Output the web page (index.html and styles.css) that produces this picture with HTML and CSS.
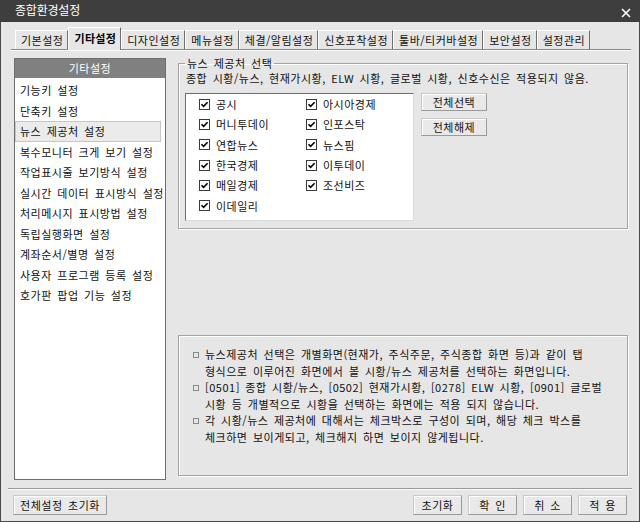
FILE: index.html
```html
<!DOCTYPE html>
<html lang="ko">
<head>
<meta charset="utf-8">
<title>종합환경설정</title>
<link rel="stylesheet" href="styles.css">
</head>
<body>
<div class="window">
  <div class="titlebar">
    <span class="title">종합환경설정</span>
    <svg class="close" width="10" height="10" viewBox="0 0 10 10"><path d="M1 1L9 9M9 1L1 9" stroke="#fff" stroke-width="1.6"/></svg>
  </div>
  <div class="frame">
    <div class="tabs">
      <div class="tab">기본설정</div>
      <div class="tab active">기타설정</div>
      <div class="tab">디자인설정</div>
      <div class="tab">메뉴설정</div>
      <div class="tab">체결/알림설정</div>
      <div class="tab">신호포착설정</div>
      <div class="tab">툴바/티커바설정</div>
      <div class="tab">보안설정</div>
      <div class="tab">설정관리</div>
    </div>
    <div class="content">
      <div class="sidebar">
        <div class="side-head">기타설정</div>
        <ul class="side-list">
          <li>기능키 설정</li>
          <li>단축키 설정</li>
          <li class="sel">뉴스 제공처 설정</li>
          <li>복수모니터 크게 보기 설정</li>
          <li>작업표시줄 보기방식 설정</li>
          <li>실시간 데이터 표시방식 설정</li>
          <li>처리메시지 표시방법 설정</li>
          <li>독립실행화면 설정</li>
          <li>계좌순서/별명 설정</li>
          <li>사용자 프로그램 등록 설정</li>
          <li>호가판 팝업 기능 설정</li>
        </ul>
      </div>
      <div class="main">
        <fieldset class="group">
          <legend>뉴스 제공처 선택</legend>
          <div class="note">종합 시황/뉴스, 현재가시황, ELW 시황, 글로벌 시황, 신호수신은 적용되지 않음.</div>
          <div class="pick-row">
            <div class="checklist">
              <label class="chk"><svg width="11" height="11" viewBox="0 0 11 11"><rect x="0.5" y="0.5" width="10" height="10" fill="#fff" stroke="#3a3a3a"/><path d="M2.5 5.2L4.6 7.4L8.6 3.2" fill="none" stroke="#000" stroke-width="1.6"/></svg>공시</label>
              <label class="chk"><svg width="11" height="11" viewBox="0 0 11 11"><rect x="0.5" y="0.5" width="10" height="10" fill="#fff" stroke="#3a3a3a"/><path d="M2.5 5.2L4.6 7.4L8.6 3.2" fill="none" stroke="#000" stroke-width="1.6"/></svg>머니투데이</label>
              <label class="chk"><svg width="11" height="11" viewBox="0 0 11 11"><rect x="0.5" y="0.5" width="10" height="10" fill="#fff" stroke="#3a3a3a"/><path d="M2.5 5.2L4.6 7.4L8.6 3.2" fill="none" stroke="#000" stroke-width="1.6"/></svg>연합뉴스</label>
              <label class="chk"><svg width="11" height="11" viewBox="0 0 11 11"><rect x="0.5" y="0.5" width="10" height="10" fill="#fff" stroke="#3a3a3a"/><path d="M2.5 5.2L4.6 7.4L8.6 3.2" fill="none" stroke="#000" stroke-width="1.6"/></svg>한국경제</label>
              <label class="chk"><svg width="11" height="11" viewBox="0 0 11 11"><rect x="0.5" y="0.5" width="10" height="10" fill="#fff" stroke="#3a3a3a"/><path d="M2.5 5.2L4.6 7.4L8.6 3.2" fill="none" stroke="#000" stroke-width="1.6"/></svg>매일경제</label>
              <label class="chk"><svg width="11" height="11" viewBox="0 0 11 11"><rect x="0.5" y="0.5" width="10" height="10" fill="#fff" stroke="#3a3a3a"/><path d="M2.5 5.2L4.6 7.4L8.6 3.2" fill="none" stroke="#000" stroke-width="1.6"/></svg>이데일리</label>
              <label class="chk"><svg width="11" height="11" viewBox="0 0 11 11"><rect x="0.5" y="0.5" width="10" height="10" fill="#fff" stroke="#3a3a3a"/><path d="M2.5 5.2L4.6 7.4L8.6 3.2" fill="none" stroke="#000" stroke-width="1.6"/></svg>아시아경제</label>
              <label class="chk"><svg width="11" height="11" viewBox="0 0 11 11"><rect x="0.5" y="0.5" width="10" height="10" fill="#fff" stroke="#3a3a3a"/><path d="M2.5 5.2L4.6 7.4L8.6 3.2" fill="none" stroke="#000" stroke-width="1.6"/></svg>인포스탁</label>
              <label class="chk"><svg width="11" height="11" viewBox="0 0 11 11"><rect x="0.5" y="0.5" width="10" height="10" fill="#fff" stroke="#3a3a3a"/><path d="M2.5 5.2L4.6 7.4L8.6 3.2" fill="none" stroke="#000" stroke-width="1.6"/></svg>뉴스핌</label>
              <label class="chk"><svg width="11" height="11" viewBox="0 0 11 11"><rect x="0.5" y="0.5" width="10" height="10" fill="#fff" stroke="#3a3a3a"/><path d="M2.5 5.2L4.6 7.4L8.6 3.2" fill="none" stroke="#000" stroke-width="1.6"/></svg>이투데이</label>
              <label class="chk"><svg width="11" height="11" viewBox="0 0 11 11"><rect x="0.5" y="0.5" width="10" height="10" fill="#fff" stroke="#3a3a3a"/><path d="M2.5 5.2L4.6 7.4L8.6 3.2" fill="none" stroke="#000" stroke-width="1.6"/></svg>조선비즈</label>
            </div>
            <div class="side-btns">
              <button class="btn btn-wide">전체선택</button>
              <button class="btn btn-wide">전체해제</button>
            </div>
          </div>
        </fieldset>
        <ul class="desc">
          <li>뉴스제공처 선택은 개별화면(현재가, 주식주문, 주식종합 화면 등)과 같이 탭<br>형식으로 이루어진 화면에서 볼 시황/뉴스 제공처를 선택하는 화면입니다.</li>
          <li>[0501] 종합 시황/뉴스, [0502] 현재가시황, [0278] ELW 시황, [0901] 글로벌<br>시황 등 개별적으로 시황을 선택하는 화면에는 적용 되지 않습니다.</li>
          <li>각 시황/뉴스 제공처에 대해서는 체크박스로 구성이 되며, 해당 체크 박스를<br>체크하면 보이게되고, 체크해지 하면 보이지 않게됩니다.</li>
        </ul>
      </div>
    </div>
    <div class="footer">
      <button class="btn btn-reset">전체설정 초기화</button>
      <div class="footer-right">
        <button class="btn btn-sm">초기화</button>
        <button class="btn btn-sm">확 인</button>
        <button class="btn btn-sm">취 소</button>
        <button class="btn btn-sm">적 용</button>
      </div>
    </div>
  </div>
</div>
</body>
</html>
```
FILE: styles.css
```css
html, body {
  margin: 0;
  padding: 0;
  background: #e6e6e6;
}

.window {
  width: 640px;
  height: 522px;
  display: flex;
  flex-direction: column;
  font-family: "Noto Sans CJK KR", "Noto Sans", sans-serif;
  font-size: 11px;
  letter-spacing: 0.5px;
  word-spacing: 1.9px;
  color: #111;
  background: #e6e6e6;
}

.titlebar {
  height: 22px;
  flex: none;
  background: #3e3e3e;
  color: #fff;
  display: flex;
  align-items: center;
  justify-content: space-between;
  padding: 0 9px 0 15px;
  font-size: 12px;
}

.title {
  line-height: 20px;
  margin-top: -2px;
  letter-spacing: -0.2px;
}

.close {
  margin-top: 3px;
}

.frame {
  flex: 1;
  display: flex;
  flex-direction: column;
  border: 1px solid #4a4a4a;
  border-top: none;
  background: #e6e6e6;
}

.tabs {
  display: flex;
  align-items: flex-end;
  height: 22px;
  margin: 5px 8px 0 10px;
  padding-left: 4px;
  border-bottom: 1px solid #8a8a8a;
  box-shadow: 0 1px 0 #fbfbfb;
}

.tab {
  height: 18px;
  line-height: 18px;
  padding: 0 4px 0 5px;
  border-top: 1px solid #fff;
  border-left: 1px solid #fff;
  border-right: 1px solid #6f6f6f;
  white-space: nowrap;
  color: #111;
}

.tab.active {
  height: 22px;
  line-height: 21px;
  margin-bottom: -1px;
  font-weight: bold;
  letter-spacing: 0.3px;
  background: #e6e6e6;
  color: #000;
  position: relative;
  z-index: 1;
}

.content {
  display: flex;
  gap: 12px;
  height: 422px;
  margin-top: 8px;
  padding: 0 11px 0 13px;
}

.sidebar {
  width: 152px;
  flex: none;
  box-sizing: border-box;
  border: 1px solid #6e6e6e;
  background: #fff;
}

.side-head {
  height: 19px;
  line-height: 19px;
  background: #808080;
  color: #fff;
  text-align: center;
}

.side-list {
  list-style: none;
  margin: 0;
  padding: 2px 0 0 0;
}

.side-list li {
  height: 20.5px;
  line-height: 20.5px;
  padding-left: 5px;
  white-space: nowrap;
  box-sizing: border-box;
}

.side-list li.sel {
  background: #ebebeb;
  border: 1px solid #c6c6c6;
  line-height: 18.5px;
  padding-left: 4px;
  margin-right: 4px;
}

.main {
  flex: 1;
  display: flex;
  flex-direction: column;
}

.group {
  margin: -2px 0 0 0;
  padding: 0 6px 0 7px;
  height: 173px;
  box-sizing: border-box;
  border: 1px solid #a3a3a3;
  box-shadow: inset 1px 1px 0 #fff, 1px 1px 0 #fff;
  min-width: 0;
}

.group legend {
  padding: 0 2px;
  margin-left: -1px;
  line-height: 14px;
}

.note {
  line-height: 16px;
  white-space: nowrap;
}

.pick-row {
  display: flex;
  align-items: flex-start;
  gap: 7px;
  margin-top: 7px;
  margin-left: -1px;
}

.checklist {
  width: 229px;
  height: 128px;
  box-sizing: border-box;
  background: #fff;
  border: 1px solid;
  border-color: #6f6f6f #dcdcdc #dcdcdc #6f6f6f;
  padding: 0 0 0 13px;
  display: grid;
  grid-template-columns: 107px 107px;
  grid-template-rows: repeat(6, 20.3px);
  grid-auto-flow: column;
  align-content: start;
}

.chk {
  display: flex;
  align-items: center;
  gap: 6px;
  white-space: nowrap;
}

.chk svg {
  flex: none;
}

.side-btns {
  display: flex;
  flex-direction: column;
  gap: 7px;
}

.btn {
  font-family: inherit;
  font-size: 11px;
  letter-spacing: 0.5px;
  word-spacing: 1.9px;
  color: #111;
  background: #e9e9e9;
  border: 1px solid;
  border-color: #c9c9c9 #9a9a9a #9a9a9a #c9c9c9;
  box-shadow: inset 1px 1px 0 #fff;
  padding: 0;
  margin: 0;
  box-sizing: border-box;
  white-space: nowrap;
}

.btn-wide {
  width: 66px;
  height: 18px;
  line-height: 16px;
}

.desc {
  list-style: none;
  margin: 106px 0 0 0;
  height: 141px;
  box-sizing: border-box;
  padding: 10px 0 0 14px;
  border: 1px solid #a3a3a3;
  box-shadow: inset 1px 1px 0 #fff, 1px 1px 0 #fff;
  line-height: 16.6px;
}

.desc li {
  display: flex;
  align-items: flex-start;
  white-space: nowrap;
}

.desc li::before {
  content: "";
  flex: none;
  width: 4px;
  height: 4px;
  border: 1px solid #8a8a8a;
  margin: 6px 6px 0 0;
}

.footer {
  margin: 8px 7px 0 7px;
  padding: 6px 5px 0 5px;
  border-top: 1px solid #9a9a9a;
  box-shadow: inset 0 1px 0 #fbfbfb;
  display: flex;
  justify-content: space-between;
  align-items: flex-start;
}

.footer-right {
  display: flex;
  gap: 6px;
}

.btn-reset {
  width: 94px;
  height: 20px;
  line-height: 18px;
}

.btn-sm {
  width: 49px;
  height: 20px;
  line-height: 18px;
}
```
